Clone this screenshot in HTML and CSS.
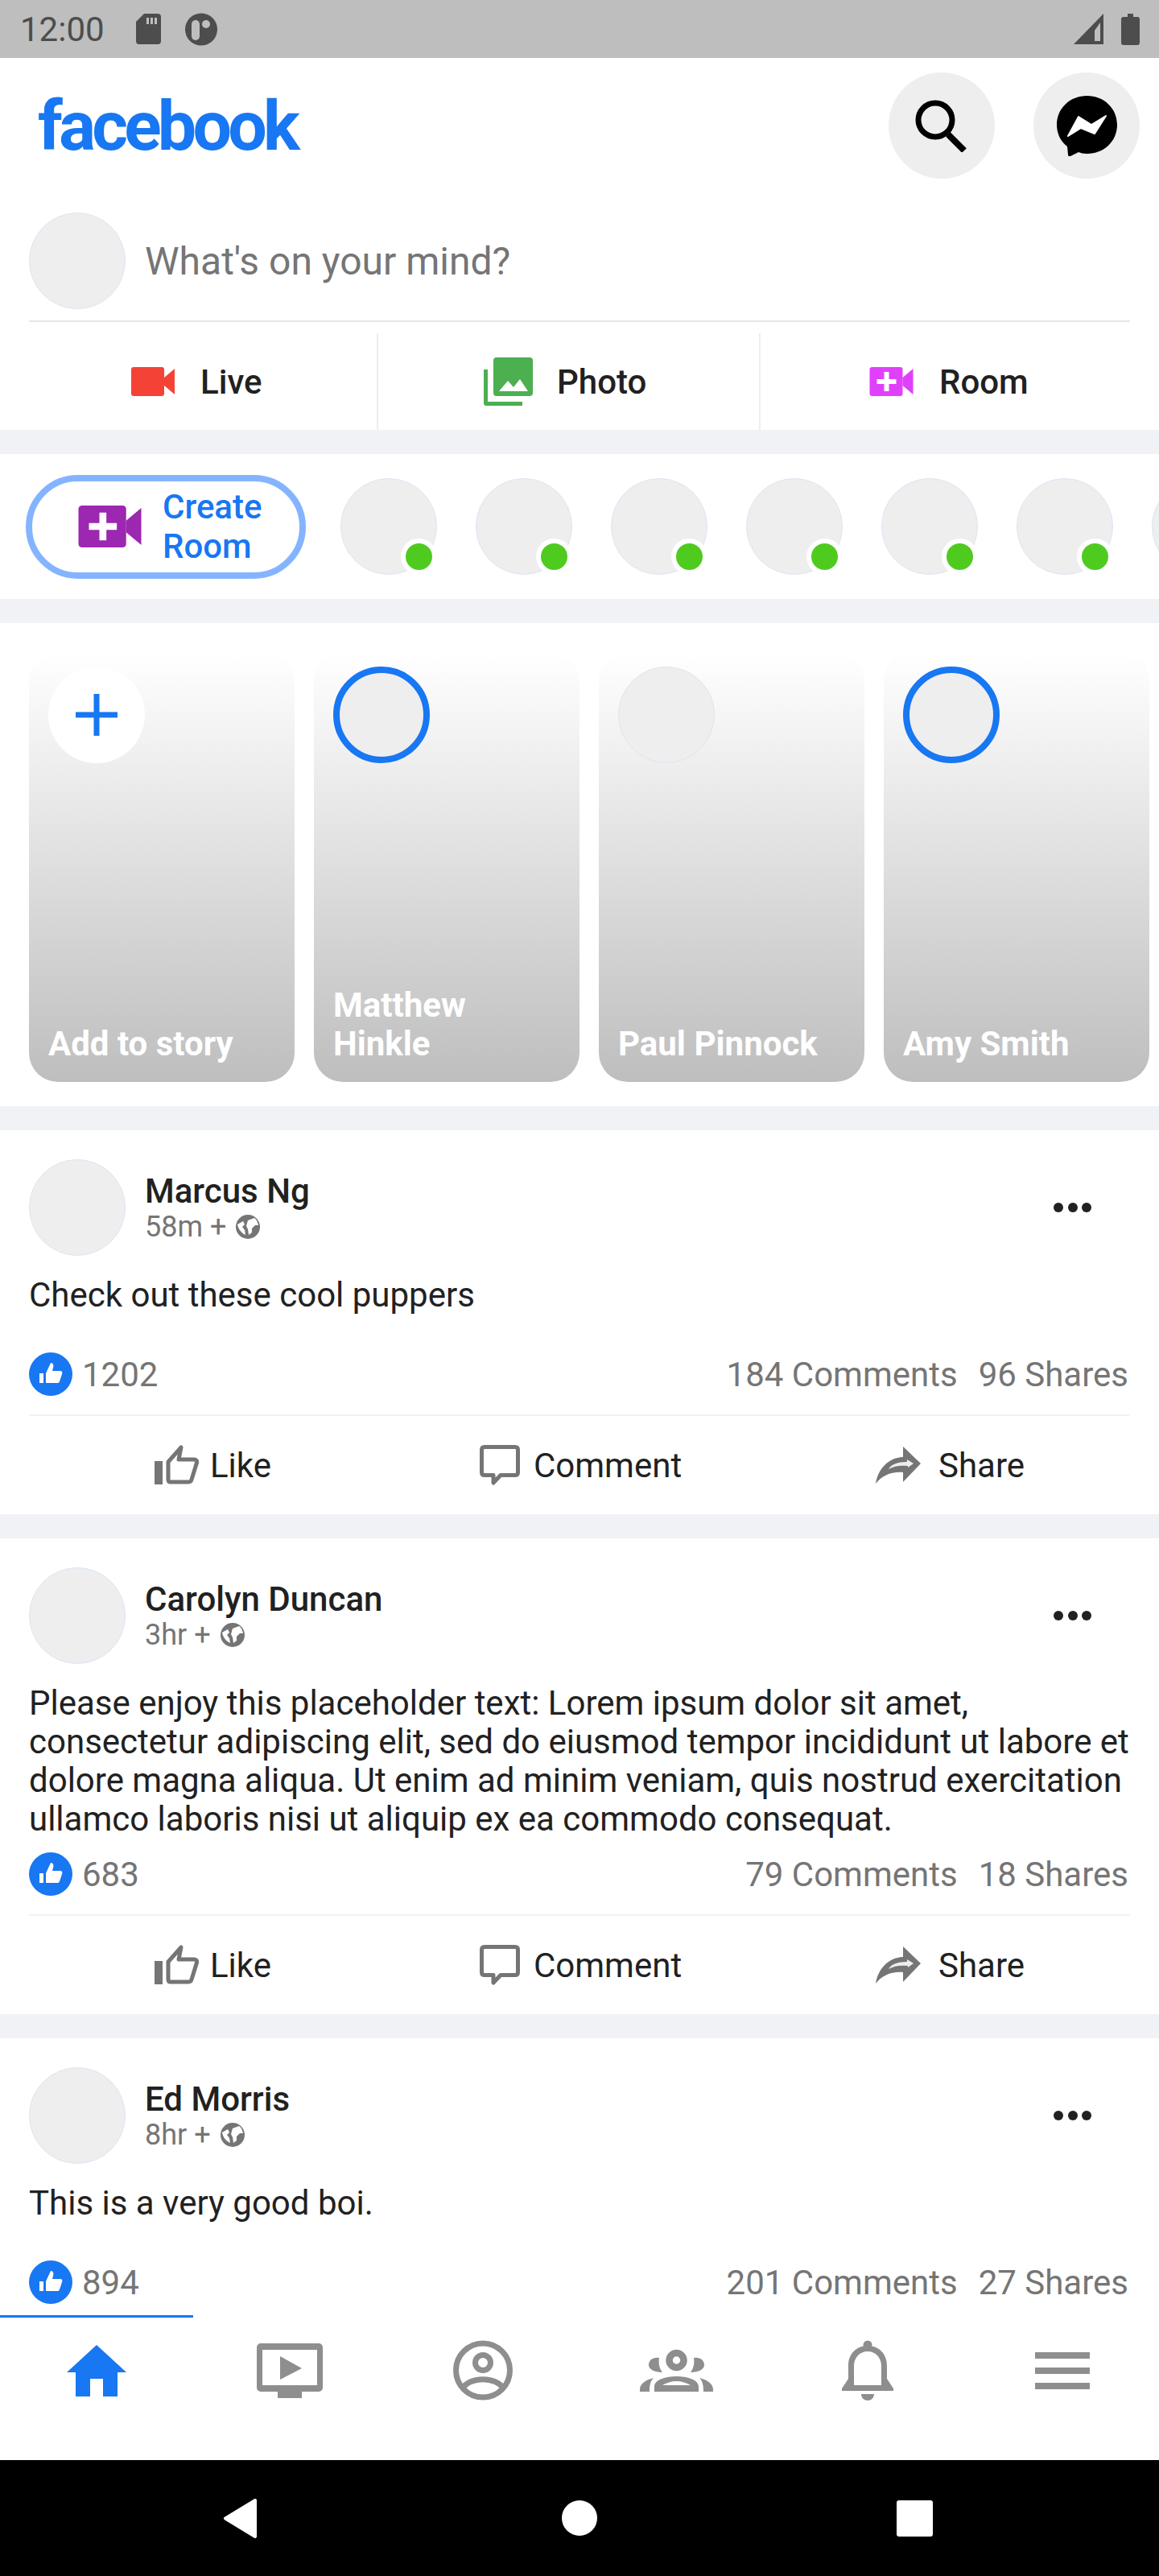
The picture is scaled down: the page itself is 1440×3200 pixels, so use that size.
FILE: index.html
```html
<!DOCTYPE html>
<html lang="en">
<head>
  <meta charset="UTF-8" />
  <title>Facebook</title>
  <link rel="stylesheet" href="styles.css">
</head>
<body>

  <!-- Shared icons -->
  <svg class="defs" width="0" height="0">
    <symbol id="cam" viewBox="0 0 54 36">
      <rect width="41" height="36" rx="3" fill="currentColor" />
      <path d="M41 13 54 2V34L41 23Z" fill="currentColor" />
    </symbol>
    <symbol id="camPlus" viewBox="0 0 54 36">
      <rect width="41" height="36" rx="3" fill="currentColor" />
      <path d="M41 13 54 2V34L41 23Z" fill="currentColor" />
      <path d="M9 15H18V6H24V15H33V21H24V30H18V21H9Z" fill="#fff" />
    </symbol>
    <symbol id="globe" viewBox="0 0 30 30">
      <circle cx="15" cy="15" r="15" fill="#757575" />
      <path d="M2 12 9 8 11 12 8 15 11 19 12 25C7 23 3 18 2 12ZM15 7 23 4C26 6 27 9 28 13H24L20 17V22L16 25 15 18 13 14Z" fill="#fff" />
    </symbol>
    <symbol id="badge" viewBox="0 0 54 54">
      <circle cx="27" cy="27" r="27" fill="#1877f2" />
      <path d="M13 26H18V38H13ZM21 38V26L27 13C30 13 31 16 30 19L29 23H39C41 23 42 25 41 27L38 36C37.500 37.500 36.500 38 35 38Z" fill="#fff" />
    </symbol>
    <symbol id="like" viewBox="0 0 56 50">
      <rect x="1" y="20" width="10" height="29" fill="#757575" />
      <path d="M18 43V21L34 3 31 18H50C53 18 54 20 53.500 22L47 43C46.500 45 45 46 43 46H21C19 46 18 45 18 43Z" fill="none" stroke="#757575" stroke-width="5" stroke-linejoin="round" />
    </symbol>
    <symbol id="comment" viewBox="0 0 50 50">
      <path d="M6 2.500H44C46.500 2.500 47.500 3.500 47.500 6V34C47.500 36.500 46.500 37.500 44 37.500H26L17 47V37.500H6C3.500 37.500 2.500 36.500 2.500 34V6C2.500 3.500 3.500 2.500 6 2.500Z" fill="none" stroke="#757575" stroke-width="5" stroke-linejoin="round" />
    </symbol>
    <symbol id="share" viewBox="0 0 57 46">
      <path d="M35 0 57 21 35 44V32C20 31 9 36 1 46 4 28 16 14 35 13Z" fill="#757575" />
      <path d="M17 28C20 22 29 19 40 19V16L48 21 41 26V24C31 23 24 24 17 28Z" fill="#eee" />
    </symbol>
  </svg>

  <div class="status-bar">
    <span class="clock">12:00</span>
    <svg class="sd-icon" width="31" height="38" viewBox="0 0 31 38">
      <path d="M10 0H27A4 4 0 0 1 31 4V34A4 4 0 0 1 27 38H4A4 4 0 0 1 0 34V10Z" fill="#4d4d4d" />
      <path d="M13 5H16V13H13ZM18 5H21V13H18ZM23 5H26V13H23Z" fill="#bebebe" />
    </svg>
    <svg class="app-icon" width="40" height="41" viewBox="0 0 40 41">
      <circle cx="20" cy="20.500" r="20" fill="#4d4d4d" />
      <rect x="8" y="9" width="10" height="25" rx="5" fill="#bebebe" />
      <circle cx="26" cy="14" r="5" fill="#bebebe" />
    </svg>
    <svg class="signal-icon" width="37" height="38" viewBox="0 0 37 38">
      <path d="M37 0V38H0Z" fill="#4d4d4d" />
      <path d="M26 21 33 11V34H26Z" fill="#bebebe" />
    </svg>
    <svg class="battery-icon" width="23" height="39" viewBox="0 0 23 39">
      <path d="M8 0H15V4H20A3 3 0 0 1 23 7V36A3 3 0 0 1 20 39H3A3 3 0 0 1 0 36V7A3 3 0 0 1 3 4H8Z" fill="#4d4d4d" />
    </svg>
  </div>

  <main class="feed">

    <section class="card">
      <header class="top-bar">
        <span class="logo">facebook</span>
        <div class="round-btn search-btn">
          <svg width="66" height="65" viewBox="0 0 66 65">
            <circle cx="25" cy="25" r="21" fill="none" stroke="#000" stroke-width="7" />
            <path d="M41 43 61 63" stroke="#000" stroke-width="8" />
          </svg>
        </div>
        <div class="round-btn">
          <svg width="75" height="75" viewBox="0 0 75 75">
            <path d="M37.500 0C58 0 75 15 75 36 75 57 58 72 37.500 72 33 72 30 71 27 70L17 75C15 75.500 14 75 14 73L13 63C5 57 0 47 0 36 0 15 17 0 37.500 0Z" />
            <path d="M14 50 27 26 43 36 61 25 47 47 30 40Z" fill="#fff" stroke="#fff" stroke-width="2" stroke-linejoin="round" />
          </svg>
        </div>
      </header>

      <div class="composer">
        <div class="avatar"></div>
        <span class="composer-hint">What's on your mind?</span>
      </div>

      <div class="quick-actions">
        <div class="quick-action quick-live">
          <svg class="cam-red" width="54" height="36"><use href="#cam" /></svg>
          <span>Live</span>
        </div>
        <div class="quick-action quick-photo">
          <svg width="61" height="60" viewBox="0 0 61 60">
            <rect x="12" width="49" height="48" rx="4" fill="#4caf50" />
            <path d="M0 15H5V55H48V60H3A3 3 0 0 1 0 57Z" fill="#4caf50" />
            <path d="M19 42 30 29 37 37 45 27 55 42Z" fill="#fff" />
          </svg>
          <span>Photo</span>
        </div>
        <div class="quick-action quick-room">
          <svg class="cam-pink" width="55" height="36"><use href="#camPlus" /></svg>
          <span>Room</span>
        </div>
      </div>
    </section>

    <section class="card rooms">
      <div class="create-room">
        <svg class="cam-purple" width="79" height="52"><use href="#camPlus" /></svg>
        <span>Create<br>Room</span>
      </div>
      <div class="avatar online"></div>
      <div class="avatar online"></div>
      <div class="avatar online"></div>
      <div class="avatar online"></div>
      <div class="avatar online"></div>
      <div class="avatar online"></div>
      <div class="avatar online"></div>
    </section>

    <section class="card stories">
      <div class="story">
        <div class="add-story">
          <svg width="52" height="52" viewBox="0 0 52 52">
            <path d="M0 22.500H22.500V0H29.500V22.500H52V29.500H29.500V52H22.500V29.500H0Z" fill="#1877f2" />
          </svg>
        </div>
        <span class="story-name">Add to story</span>
      </div>
      <div class="story">
        <div class="avatar ring"></div>
        <span class="story-name">Matthew<br>Hinkle</span>
      </div>
      <div class="story">
        <div class="avatar"></div>
        <span class="story-name">Paul Pinnock</span>
      </div>
      <div class="story">
        <div class="avatar ring"></div>
        <span class="story-name">Amy Smith</span>
      </div>
    </section>

    <!-- Posts -->
    <article class="card post">
      <div class="post-head">
        <div class="avatar"></div>
        <div class="post-author">
          <div class="author-name">Marcus Ng</div>
          <div class="post-meta">58m + <svg width="30" height="30"><use href="#globe" /></svg></div>
        </div>
        <div class="dots"><i></i><i></i><i></i></div>
      </div>
      <p class="post-text">Check out these cool puppers</p>
      <div class="post-stats">
        <svg width="54" height="54"><use href="#badge" /></svg>
        <span class="like-count">1202</span>
        <span class="comment-count">184 Comments</span>
        <span>96 Shares</span>
      </div>
      <div class="post-actions">
        <div class="post-action"><svg width="56" height="50"><use href="#like" /></svg><span>Like</span></div>
        <div class="post-action"><svg width="50" height="50"><use href="#comment" /></svg><span>Comment</span></div>
        <div class="post-action"><svg width="57" height="46"><use href="#share" /></svg><span>Share</span></div>
      </div>
    </article>

    <article class="card post">
      <div class="post-head">
        <div class="avatar"></div>
        <div class="post-author">
          <div class="author-name">Carolyn Duncan</div>
          <div class="post-meta">3hr + <svg width="30" height="30"><use href="#globe" /></svg></div>
        </div>
        <div class="dots"><i></i><i></i><i></i></div>
      </div>
      <p class="post-text">Please enjoy this placeholder text: Lorem ipsum dolor sit amet, consectetur adipiscing elit, sed do eiusmod tempor incididunt ut labore et dolore magna aliqua. Ut enim ad minim veniam, quis nostrud exercitation ullamco laboris nisi ut aliquip ex ea commodo consequat.</p>
      <div class="post-stats">
        <svg width="54" height="54"><use href="#badge" /></svg>
        <span class="like-count">683</span>
        <span class="comment-count">79 Comments</span>
        <span>18 Shares</span>
      </div>
      <div class="post-actions">
        <div class="post-action"><svg width="56" height="50"><use href="#like" /></svg><span>Like</span></div>
        <div class="post-action"><svg width="50" height="50"><use href="#comment" /></svg><span>Comment</span></div>
        <div class="post-action"><svg width="57" height="46"><use href="#share" /></svg><span>Share</span></div>
      </div>
    </article>

    <article class="card post">
      <div class="post-head">
        <div class="avatar"></div>
        <div class="post-author">
          <div class="author-name">Ed Morris</div>
          <div class="post-meta">8hr + <svg width="30" height="30"><use href="#globe" /></svg></div>
        </div>
        <div class="dots"><i></i><i></i><i></i></div>
      </div>
      <p class="post-text">This is a very good boi.</p>
      <div class="post-stats">
        <svg width="54" height="54"><use href="#badge" /></svg>
        <span class="like-count">894</span>
        <span class="comment-count">201 Comments</span>
        <span>27 Shares</span>
      </div>
    </article>
  </main>

  <nav class="tab-bar">
    <div class="tab active">
      <svg width="74" height="64" viewBox="0 0 74 64">
        <path d="M37 0 74 34H63V64H45V42H29V64H11V34H0Z" fill="#1877f2" />
      </svg>
    </div>
    <div class="tab">
      <svg width="82" height="68" viewBox="0 0 82 68">
        <path d="M5 0H77A5 5 0 0 1 82 5V55A5 5 0 0 1 77 60H56V68H26V60H5A5 5 0 0 1 0 55V5A5 5 0 0 1 5 0ZM7 8V52H75V8Z" fill="#8e8e8e" fill-rule="evenodd" />
        <path d="M29 16 56 31 29 45Z" fill="#8e8e8e" />
      </svg>
    </div>
    <div class="tab">
      <svg width="74" height="75" viewBox="0 0 74 75">
        <circle cx="37" cy="37.500" r="33.500" fill="none" stroke="#8e8e8e" stroke-width="7" />
        <circle cx="37" cy="28" r="9.500" fill="none" stroke="#8e8e8e" stroke-width="7" />
        <path d="M12 60C20 45 54 45 62 60" fill="none" stroke="#8e8e8e" stroke-width="7" />
      </svg>
    </div>
    <div class="tab">
      <svg width="91" height="53" viewBox="0 0 91 53">
        <circle cx="45.500" cy="14" r="9" fill="none" stroke="#8e8e8e" stroke-width="8.500" />
        <path d="M24 11C16 10 11 14 11 20 11 25 18 29 28 29 24 24 23 17 24 11ZM67 11C75 10 80 14 80 20 80 25 73 29 63 29 67 24 68 17 67 11Z" fill="#8e8e8e" />
        <path d="M18 53V47C18 38 32 34 45.500 34 59 34 73 38 73 47V53ZM28 45H63C58 42 52 40 45.500 40 39 40 33 42 28 45Z" fill="#8e8e8e" fill-rule="evenodd" />
        <path d="M0 53V50C0 43 8 38 17 36 13 40 12 45 12 53ZM91 53V50C91 43 83 38 74 36 78 40 79 45 79 53Z" fill="#8e8e8e" />
      </svg>
    </div>
    <div class="tab tab-bell">
      <svg width="64" height="75" viewBox="0 0 64 75">
        <circle cx="32" cy="6" r="5.500" fill="#8e8e8e" />
        <path d="M32 7C18 7 8 17 8 32V48L0 60V63H64V60L56 48V32C56 17 46 7 32 7ZM32 14C22 14 15 22 15 32V56H49V32C49 22 42 14 32 14Z" fill="#8e8e8e" fill-rule="evenodd" />
        <path d="M24 67H40C40 72 36 75 32 75 28 75 24 72 24 67Z" fill="#8e8e8e" />
      </svg>
    </div>
    <div class="tab">
      <div class="menu-icon"><i></i><i></i><i></i></div>
    </div>
  </nav>

  <div class="nav-bar">
    <svg width="42" height="49" viewBox="0 0 42 49">
      <path d="M39 2 2 24.500 39 47Z" fill="#fff" stroke="#fff" stroke-width="4" stroke-linejoin="round" />
    </svg>
    <div class="nav-home"></div>
    <div class="nav-recent"></div>
  </div>

</body>
</html>
```

FILE: styles.css
```css
* {
  box-sizing: border-box;
}

body {
  margin: 0;
  width: 1440px;
  height: 3200px;
  display: flex;
  flex-direction: column;
  overflow: hidden;
  background: #f0f2f5;
  color: #212121;
  font-family: 'Roboto', sans-serif;
  font-size: 42px;
}

.defs {
  position: absolute;
}

svg {
  display: block;
  flex: none;
}

/* Status bar */
.status-bar {
  height: 72px;
  flex: none;
  display: flex;
  align-items: center;
  padding: 0 24px 0 25px;
  background: #bebebe;
}

.clock {
  width: 144px;
  font-size: 42px;
  color: #4d4d4d;
}

.sd-icon {
  margin-right: 30px;
}

.app-icon {
  margin-right: auto;
}

.battery-icon {
  margin-left: 22px;
}

/* Feed */
.feed {
  flex: 1;
  min-height: 0;
  overflow: hidden;
}

.card {
  background: #fff;
  margin-bottom: 30px;
}

.avatar {
  width: 120px;
  height: 120px;
  flex: none;
  border-radius: 50%;
  background: #eee;
  border: 1px solid #dbe6f5;
}

.top-bar {
  display: flex;
  align-items: center;
  height: 168px;
  padding: 18px 24px 18px 47px;
}

.logo {
  margin-right: auto;
  color: #1877f2;
  font-size: 86px;
  font-weight: 700;
  letter-spacing: -4.8px;
}

.round-btn {
  width: 132px;
  height: 132px;
  border-radius: 50%;
  background: #eee;
  display: flex;
  align-items: center;
  justify-content: center;
}

.search-btn {
  margin-right: 48px;
}

.composer {
  display: flex;
  align-items: center;
  margin: 24px 36px 0;
  padding-bottom: 14px;
  border-bottom: 2px solid #e6e6e6;
}

.composer-hint {
  margin-left: 24px;
  font-size: 48px;
  color: #757575;
}

.quick-actions {
  display: flex;
  padding-top: 14px;
  height: 134px;
}

.quick-action {
  display: flex;
  align-items: center;
  gap: 32px;
  font-weight: 500;
  border-right: 2px solid #eee;
}

.quick-live {
  width: 470px;
  padding-left: 163px;
}

.quick-photo {
  width: 475px;
  padding-left: 131px;
  gap: 30px;
}

.quick-room {
  flex: 1;
  padding-left: 135px;
  border-right: 0;
}

.cam-red {
  color: #f44336;
}

.cam-pink {
  color: #e040fb;
}

.cam-purple {
  color: #9c27b0;
}

/* Rooms */
.rooms {
  display: flex;
  align-items: center;
  gap: 48px;
  height: 180px;
  padding-left: 32px;
  overflow: hidden;
}

.create-room {
  width: 348px;
  height: 129px;
  flex: none;
  margin-right: -5px;
  display: flex;
  align-items: center;
  gap: 26px;
  padding-left: 57px;
  border: 8px solid #85b4ff;
  border-radius: 65px;
  color: #1877f2;
  font-weight: 500;
  line-height: 49px;
}

.online {
  position: relative;
}

.online::after {
  content: "";
  position: absolute;
  right: -1px;
  bottom: -1px;
  box-sizing: border-box;
  width: 45px;
  height: 45px;
  border-radius: 50%;
  background: #4fcb20;
  border: 6px solid #fff;
}

/* Stories */
.stories {
  display: flex;
  gap: 24px;
  height: 600px;
  padding: 36px 0 0 36px;
}

.story {
  width: 330px;
  height: 534px;
  display: flex;
  flex-direction: column;
  justify-content: space-between;
  padding: 18px 24px 23px;
  border-radius: 36px;
  background: linear-gradient(#fff, #bebebe);
}

.story-name {
  color: #fff;
  font-weight: 700;
  line-height: 48px;
}

.add-story {
  width: 120px;
  height: 120px;
  border-radius: 50%;
  background: #fff;
  display: flex;
  align-items: center;
  justify-content: center;
}

.ring {
  border: 8px solid #1877f2;
}

/* Posts */
.post {
  padding: 36px 36px 0;
}

.post-head {
  display: flex;
  align-items: center;
}

.post-author {
  margin-left: 24px;
  flex: 1;
}

.author-name {
  font-weight: 500;
  line-height: 48px;
}

.post-meta {
  display: flex;
  align-items: center;
  gap: 12px;
  font-size: 36px;
  line-height: 40px;
  color: #757575;
}

.dots {
  display: flex;
  gap: 5.5px;
  margin-right: 48px;
}

.dots i {
  width: 12px;
  height: 12px;
  border-radius: 50%;
  background: #212121;
}

.post-text {
  min-height: 95px;
  margin: 25px 0 0;
  padding-bottom: 17px;
  line-height: 48px;
}

.post-stats {
  display: flex;
  align-items: center;
  padding: 0 2px 23px 0;
  border-bottom: 2px solid #f0f2f5;
  color: #757575;
}

.like-count {
  margin-left: 12px;
  margin-right: auto;
}

.comment-count {
  margin-right: 26px;
}

.post-actions {
  display: flex;
  height: 122px;
  margin: 0 -36px;
}

.post-action {
  width: 480px;
  display: flex;
  align-items: center;
  gap: 14px;
}

.post-action:nth-child(1) {
  padding-left: 191px;
}

.post-action:nth-child(2) {
  padding-left: 116px;
  gap: 17px;
}

.post-action:nth-child(3) {
  padding-left: 127px;
  gap: 22px;
}

/* Bottom tabs */
.tab-bar {
  height: 180px;
  flex: none;
  display: flex;
  background: #fff;
}

.tab {
  width: 240px;
  display: flex;
  align-items: center;
  justify-content: center;
  padding-bottom: 46px;
  border-top: 3px solid transparent;
}

.tab.active {
  border-top-color: #1877f2;
}

.tab-bell {
  padding-right: 4px;
}

.menu-icon {
  width: 68px;
  display: flex;
  flex-direction: column;
  gap: 11px;
}

.menu-icon i {
  height: 8px;
  background: #8e8e8e;
}

/* Android nav */
.nav-bar {
  height: 144px;
  flex: none;
  display: flex;
  align-items: center;
  padding-left: 278px;
  background: #000;
}

.nav-home {
  width: 44px;
  height: 44px;
  margin: 0 372px 0 378px;
  border-radius: 50%;
  background: #fff;
}

.nav-recent {
  width: 45px;
  height: 45px;
  border-radius: 3px;
  background: #fff;
}
```
